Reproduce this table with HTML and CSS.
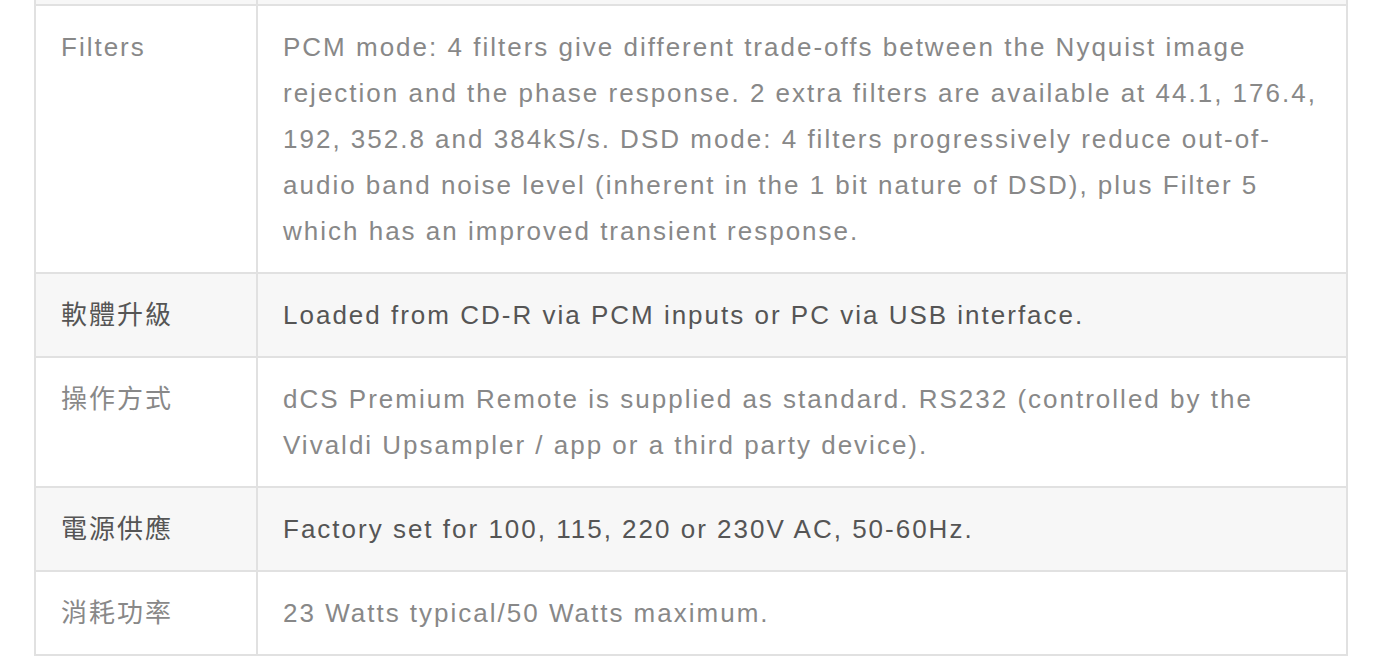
FILE: index.html
```html
<!DOCTYPE html>
<html lang="zh-Hant">
<head>
<meta charset="utf-8">
<title>Specs</title>
<link rel="stylesheet" href="styles.css">
</head>
<body>
<div class="wrap">
<table class="spec">
<colgroup><col class="c1"><col class="c2"></colgroup>
<tbody>
<tr class="alt top"><td class="k">&nbsp;</td><td class="v">&nbsp;</td></tr>
<tr><td class="k">Filters</td><td class="v">PCM mode: 4 filters give different trade-offs between the Nyquist image rejection and the phase response. 2 extra filters are available at 44.1, 176.4, 192, 352.8 and 384kS/s. DSD mode: 4 filters progressively reduce out-of-audio band noise level (inherent in the 1 bit nature of DSD), plus Filter 5 which has an improved transient response.</td></tr>
<tr class="alt"><td class="k">軟體升級</td><td class="v">Loaded from CD-R via PCM inputs or PC via USB interface.</td></tr>
<tr><td class="k">操作方式</td><td class="v">dCS Premium Remote is supplied as standard. RS232 (controlled by the Vivaldi Upsampler / app or a third party device).</td></tr>
<tr class="alt"><td class="k">電源供應</td><td class="v">Factory set for 100, 115, 220 or 230V AC, 50-60Hz.</td></tr>
<tr><td class="k">消耗功率</td><td class="v">23 Watts typical/50 Watts maximum.</td></tr>
</tbody>
</table>
</div>
</body>
</html>
```
FILE: styles.css
```css
html, body {
  margin: 0;
  padding: 0;
  background: #ffffff;
}
.wrap {
  overflow: hidden;
  height: 672px;
  padding-left: 34px;
}
.spec {
  border-collapse: collapse;
  table-layout: fixed;
  width: 1314px;
  margin-top: -80px;
  font-family: "Liberation Sans", Arial, "Noto Sans CJK TC", sans-serif;
  font-size: 26px;
  letter-spacing: 2px;
  line-height: 46px;
  color: #888888;
}
.c1 { width: 222px; }
.spec td {
  border: 2px solid #e1e1e1;
  padding: 18px 25px;
  vertical-align: top;
}
.spec tr.alt td {
  background: #f7f7f7;
  color: #555555;
}
```
